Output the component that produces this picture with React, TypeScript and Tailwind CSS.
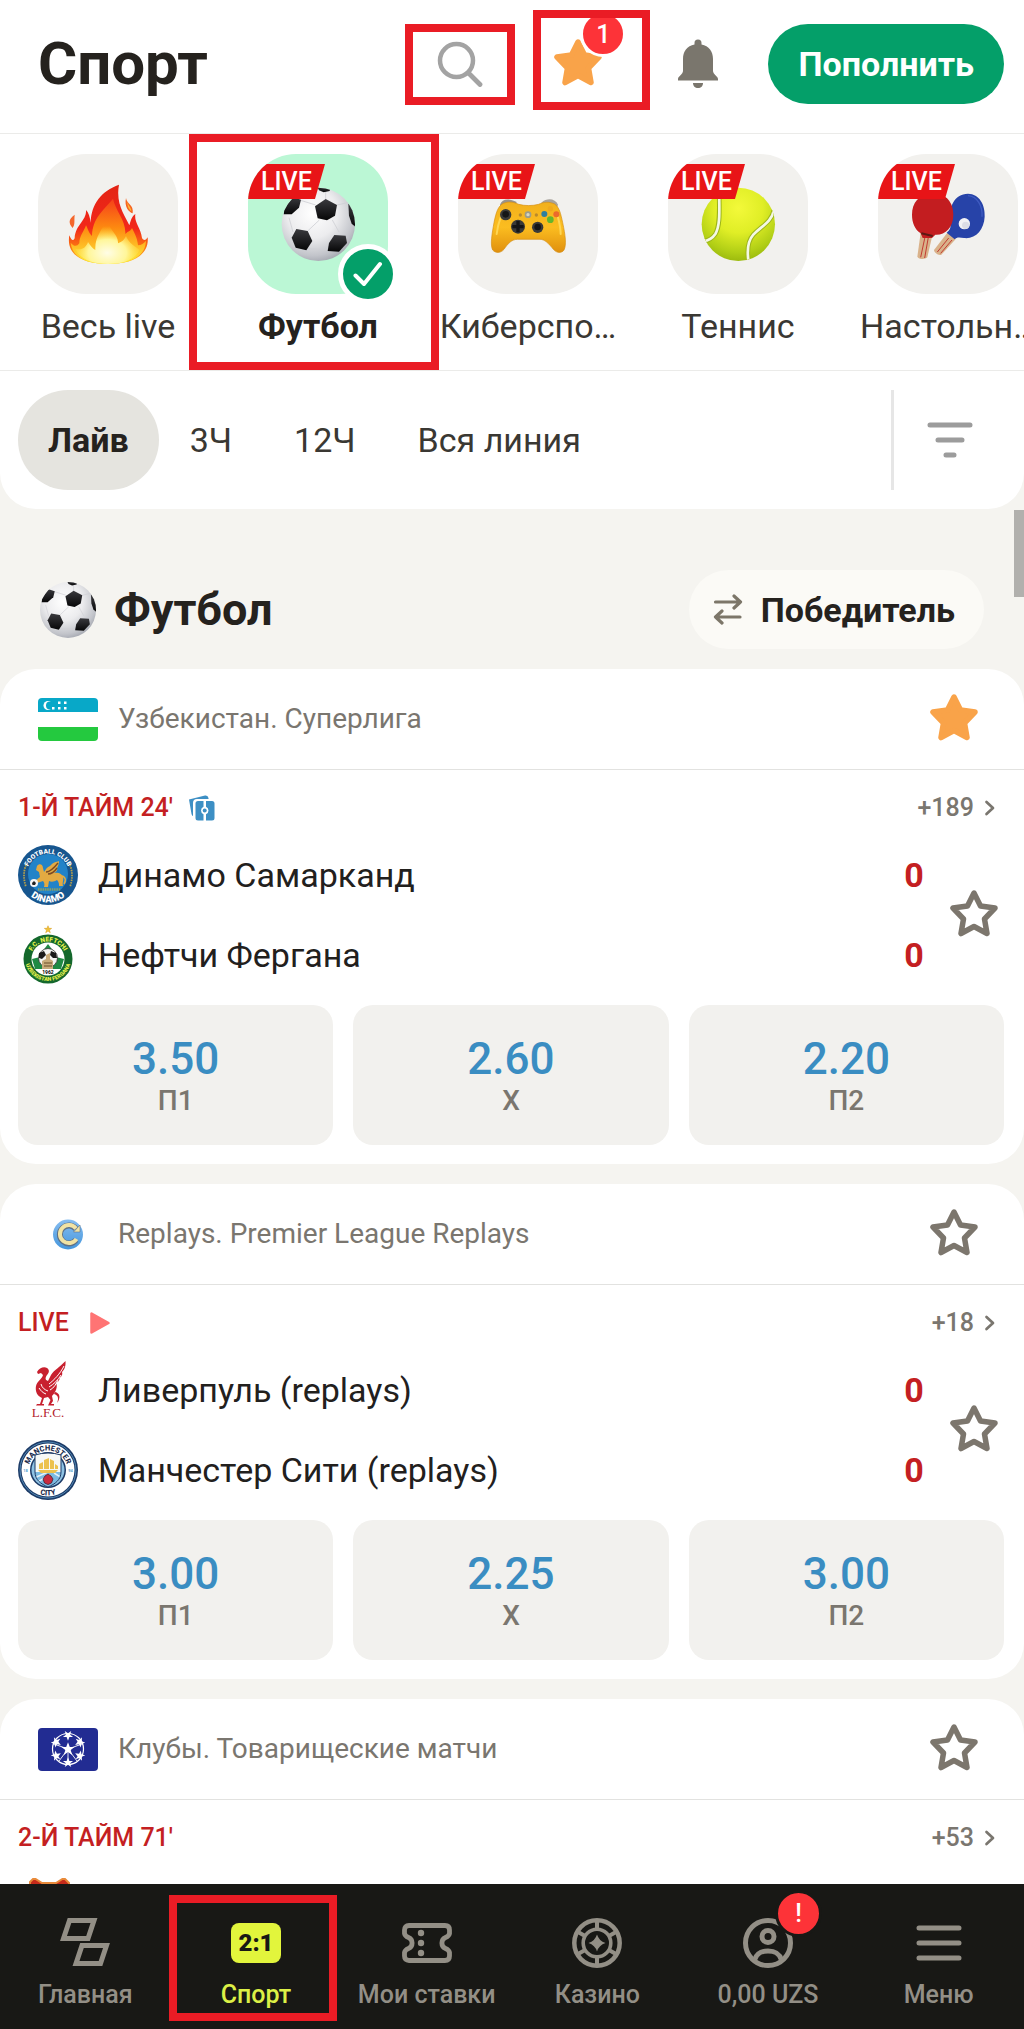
import type { ReactNode } from "react";

const FRAME = "pointer-events-none absolute z-20 border-8 border-[#ea1c25]";

/* ---------- shared icons ---------- */

const STAR =
  "M24 3 L30.5 16 L45 18 L34.5 29 L37 43.5 L24 36.5 L11 43.5 L13.5 29 L3 18 L17.5 16 Z";

function Star({ filled = false }: { filled?: boolean }) {
  const color = filled ? "#f9a349" : "#7c766d";
  return (
    <svg viewBox="0 0 48 47" className="h-[47px] w-12" aria-hidden="true">
      <path
        d={STAR}
        fill={filled ? color : "none"}
        stroke={color}
        strokeWidth="5.5"
        strokeLinejoin="round"
      />
    </svg>
  );
}

function SoccerArt({ id }: { id: string }) {
  return (
    <g>
      <defs>
        <radialGradient id={id + "g"} cx="0.42" cy="0.35" r="0.68">
          <stop offset="0" stopColor="#ffffff" />
          <stop offset="0.5" stopColor="#ececee" />
          <stop offset="0.85" stopColor="#c2c4ca" />
          <stop offset="1" stopColor="#a4a7b0" />
        </radialGradient>
        <linearGradient id={id + "p"} x1="0" y1="0" x2="0" y2="1">
          <stop offset="0" stopColor="#3a3a3e" />
          <stop offset="1" stopColor="#060607" />
        </linearGradient>
        <clipPath id={id + "c"}>
          <circle cx="110" cy="110" r="110" />
        </clipPath>
      </defs>
      <circle cx="110" cy="110" r="110" fill={"url(#" + id + "g)"} />
      <g clipPath={"url(#" + id + "c)"}>
        <path
          d="M132 36V6M102 52 57 38M113 97 78 130M152 97l20 36M166 52l36 -8M78 183l62 4M34 133 22 90"
          fill="none"
          stroke="#cfd0d5"
          strokeWidth="2.5"
        />
        <g fill={"url(#" + id + "p)"}>
          <path d="M132 34 166 52 160 84 136 98 108 92 100 56Z" />
          <path d="M44 124 78 130 92 160 74 188 42 180 30 150Z" />
          <path d="M158 142 192 144 196 166 172 192 138 190 142 166Z" />
          <path d="M8 62 34 28 58 36 52 60 30 80 6 80Z" />
          <path d="M200 48 224 60 224 120 210 108 202 84Z" />
          <path d="M106 -4 146 0 144 10 126 14 112 8Z" />
        </g>
      </g>
    </g>
  );
}

/* ---------- category pictures, drawn on a 420-unit tile ---------- */

function Tile({ children }: { children: ReactNode }) {
  return (
    <svg viewBox="0 0 420 420" className="h-full w-full" aria-hidden="true">
      {children}
    </svg>
  );
}

function FireArt() {
  return (
    <Tile>
      <defs>
        <linearGradient id="fireOuter" x1="0" y1="0" x2="0" y2="1">
          <stop offset="0" stopColor="#e32414" />
          <stop offset="0.55" stopColor="#f2281a" />
          <stop offset="0.8" stopColor="#fb7a12" />
          <stop offset="1" stopColor="#fdc526" />
        </linearGradient>
        <linearGradient id="fireMid" x1="0" y1="0" x2="0" y2="1">
          <stop offset="0" stopColor="#f5401a" />
          <stop offset="0.45" stopColor="#fd8a10" />
          <stop offset="1" stopColor="#fff03a" />
        </linearGradient>
        <radialGradient id="fireCore" cx="0.5" cy="0.75" r="0.6">
          <stop offset="0" stopColor="#fffde6" />
          <stop offset="0.5" stopColor="#fff69a" />
          <stop offset="1" stopColor="#ffdc28" stopOpacity="0" />
        </radialGradient>
      </defs>
      <path
        d="M243 92C190 112 160 148 158 206C156 190 152 176 144 168C146 200 112 212 110 252C106 262 100 260 94 244C84 300 130 330 210 330C290 330 334 300 329 250C324 258 318 262 312 252C308 220 288 206 292 180C278 190 278 204 274 214C262 186 232 150 243 92Z"
        fill="url(#fireOuter)"
      />
      <path
        d="M225 134C232 170 264 198 262 240C272 230 278 232 282 222C290 238 298 252 300 274C310 274 318 268 324 260C322 306 280 330 210 330C140 330 102 306 98 266C106 276 116 280 124 268C124 246 138 232 144 214C150 224 152 238 162 246C164 190 196 170 225 134Z"
        fill="url(#fireMid)"
      />
      <path
        d="M208 196C212 228 242 242 240 268C252 264 260 256 264 246C274 270 292 276 304 288C292 318 252 330 210 330C160 330 124 314 112 284C130 290 144 282 150 264C158 276 164 284 172 288C170 250 190 230 208 196Z"
        fill="url(#fireCore)"
      />
      <path d="M264 132C266 150 288 152 284 178C272 174 258 158 264 132Z" fill="#f7641f" />
      <path d="M268 142C270 156 280 160 280 172C272 166 268 158 268 142Z" fill="#fdb63a" />
      <path d="M110 182C90 196 92 208 104 222C112 210 108 200 110 182Z" fill="#f4672c" />
    </Tile>
  );
}

function SoccerTile() {
  return (
    <Tile>
      <g transform="translate(101 101)">
        <SoccerArt id="catBall" />
      </g>
    </Tile>
  );
}

function GamepadArt() {
  return (
    <Tile>
      <defs>
        <linearGradient id="padBody" x1="0" y1="0" x2="0" y2="1">
          <stop offset="0" stopColor="#f2b01c" />
          <stop offset="0.5" stopColor="#fbbd20" />
          <stop offset="1" stopColor="#e0900e" />
        </linearGradient>
      </defs>
      <path d="M126 152C132 134 152 132 176 144L170 160H128Z" fill="#98938c" />
      <path d="M250 146C268 130 292 134 300 152L296 164H252Z" fill="#a8a39b" />
      <path
        d="M136 148C156 140 170 146 182 151C202 156 222 156 242 151C256 144 272 142 290 150C304 160 308 178 314 206C322 244 326 272 318 288C312 298 296 298 286 286C272 268 260 256 246 256H178C162 256 150 268 138 286C128 298 112 298 104 288C96 272 102 240 108 206C114 176 120 156 136 148Z"
        fill="url(#padBody)"
        stroke="#d58f14"
        strokeWidth="2"
      />
      <path d="M128 190C122 206 118 222 116 240M300 190C304 206 308 222 308 240" fill="none" stroke="#ffd652" strokeWidth="6" strokeLinecap="round" />
      <g fill="#3a3a38">
        <circle cx="143" cy="182" r="17" />
        <circle cx="180" cy="218" r="21" />
        <circle cx="239" cy="220" r="17" />
      </g>
      <g fill="#151617">
        <circle cx="143" cy="181" r="10" />
        <circle cx="239" cy="219" r="10" />
        <path d="M175 201h10v12h12v10h-12v12h-10v-12h-12v-10h12Z" />
      </g>
      <circle cx="210" cy="182" r="10" fill="#9b9c8c" />
      <circle cx="210" cy="182" r="5" fill="#d8d6c2" />
      <circle cx="187" cy="183" r="5" fill="#b98a2c" />
      <circle cx="235" cy="183" r="5" fill="#b98a2c" />
      <circle cx="259" cy="180" r="9" fill="#2f7f9e" />
      <circle cx="277" cy="164" r="8" fill="#f0a91c" />
      <circle cx="295" cy="181" r="9" fill="#ec6a2c" />
      <circle cx="277" cy="197" r="10" fill="#64b62c" />
    </Tile>
  );
}

function TennisArt() {
  return (
    <Tile>
      <defs>
        <radialGradient id="tennis" cx="0.5" cy="0.28" r="0.75">
          <stop offset="0" stopColor="#f3f93a" />
          <stop offset="0.45" stopColor="#e0ee26" />
          <stop offset="0.8" stopColor="#b2cf16" />
          <stop offset="1" stopColor="#97b60c" />
        </radialGradient>
        <clipPath id="tennisClip">
          <circle cx="211" cy="211" r="110" />
        </clipPath>
      </defs>
      <circle cx="211" cy="211" r="110" fill="url(#tennis)" />
      <g clipPath="url(#tennisClip)" fill="none">
        <path d="M154 110C152 150 160 210 142 240C134 252 122 260 106 262" stroke="#9db51a" strokeWidth="14" />
        <path d="M154 110C152 150 160 210 142 240C134 252 122 260 106 262" stroke="#f4f8e6" strokeWidth="8" />
        <path d="M318 168C310 206 280 216 256 242C238 262 236 288 242 326" stroke="#9db51a" strokeWidth="14" />
        <path d="M318 168C310 206 280 216 256 242C238 262 236 288 242 326" stroke="#f4f8e6" strokeWidth="8" />
      </g>
    </Tile>
  );
}

function PaddlesArt() {
  return (
    <Tile>
      <path d="M208 236 234 254 190 302C182 306 168 296 168 288Z" fill="#d9b28a" />
      <path d="M212 252 178 294M222 258 188 298" stroke="#c23b32" strokeWidth="3" />
      <path
        d="M270 119C304 120 322 152 320 188C318 228 292 256 258 252C246 250 236 248 230 256L206 236C218 226 218 220 218 206C210 160 228 120 270 119Z"
        fill="#2743a8"
      />
      <path d="M270 125C298 127 314 156 312 188" fill="none" stroke="#3f5bc0" strokeWidth="4" />
      <path d="M128 236 164 240 148 310C140 318 122 316 118 308Z" fill="#d9b28a" />
      <path d="M142 244 128 310M152 244 140 312" stroke="#c23b32" strokeWidth="3" />
      <path
        d="M162 119C204 116 226 146 226 182C226 222 200 244 172 242L162 252H134L128 238C110 226 102 206 102 182C102 146 122 120 162 119Z"
        fill="#c31d20"
      />
      <path d="M130 238 164 246" stroke="#5b1a14" strokeWidth="6" />
      <circle cx="259" cy="209" r="17" fill="#f2f2f5" />
      <circle cx="263" cy="214" r="11" fill="#dcdde6" />
    </Tile>
  );
}

function Category({
  label,
  live = false,
  active = false,
  children,
}: {
  label: string;
  live?: boolean;
  active?: boolean;
  children: ReactNode;
}) {
  return (
    <li className="relative w-[210px] shrink-0">
      <button
        type="button"
        aria-pressed={active}
        className="flex w-full flex-col items-center pt-5 pb-5"
      >
        <span className="relative block">
          <span
            className={
              "relative block h-[140px] w-[140px] overflow-hidden rounded-[48px] " +
              (active ? "bg-[#bbf7d5]" : "bg-[#f2f1ee]")
            }
          >
            {children}
            {live && (
              <span className="absolute top-[10px] left-0 h-[35px] w-[77px] bg-[#e81417] pl-[13px] text-left text-[25px] leading-[35px] font-medium text-white [clip-path:polygon(0_0,100%_0,87%_100%,0_100%)]">
                LIVE
              </span>
            )}
          </span>
          {active && (
            <span className="absolute -right-[10px] -bottom-[10px] flex h-[60px] w-[60px] items-center justify-center rounded-full border-[5px] border-white bg-[#049f69]">
              <svg viewBox="0 0 30 26" className="h-[26px] w-[30px]" aria-hidden="true">
                <path
                  d="M2.5 14.500 11 23 27 3"
                  fill="none"
                  stroke="#fff"
                  strokeWidth="4"
                  strokeLinecap="round"
                  strokeLinejoin="round"
                />
              </svg>
            </span>
          )}
        </span>
        <span
          className={
            "mt-2 text-[34px] leading-[48px] whitespace-nowrap " +
            (active ? "font-bold text-[#25221e]" : "text-[#3a3833]")
          }
        >
          {label}
        </span>
      </button>
      {active && <span className={FRAME + " inset-y-0 -right-4 -left-6"} />}
    </li>
  );
}

/* ---------- league flags ---------- */

function UzFlag() {
  return (
    <svg viewBox="0 0 60 43" className="h-[43px] w-[60px] rounded" aria-hidden="true">
      <rect width="60" height="43" fill="#fff" />
      <rect width="60" height="14" fill="#08a8c8" />
      <rect y="29" width="60" height="14" fill="#24c93f" />
      <circle cx="10" cy="7.500" r="4.500" fill="#fff" />
      <circle cx="12" cy="7.500" r="4" fill="#08a8c8" />
      <g fill="#fff">
        <rect x="14" y="9" width="2.500" height="2.500" />
        <rect x="20" y="3.500" width="2.500" height="2.500" />
        <rect x="20" y="9" width="2.500" height="2.500" />
        <rect x="26" y="3.500" width="2.500" height="2.500" />
        <rect x="26" y="9" width="2.500" height="2.500" />
      </g>
    </svg>
  );
}

function ReplayCoin() {
  return (
    <svg viewBox="0 0 60 43" className="h-[43px] w-[60px]" aria-hidden="true">
      <defs>
        <linearGradient id="coin" x1="0" y1="0" x2="0" y2="1">
          <stop offset="0" stopColor="#86bdf0" />
          <stop offset="1" stopColor="#4596dc" />
        </linearGradient>
      </defs>
      <circle cx="30" cy="21.500" r="15" fill="url(#coin)" />
      <path d="M38 16A9 9 0 1 0 38 27" fill="none" stroke="#5f7186" strokeWidth="6" />
      <path d="M38 15.500A9 9 0 1 0 38.500 26" fill="none" stroke="#f1e3a4" strokeWidth="4" />
      <path d="M42 12V19H35.500Z" fill="#f1e3a4" stroke="#5f7186" strokeWidth="0.600" />
    </svg>
  );
}

const SMALL_STAR =
  "M0 -7.500 2 -2.300 7.300 -2.300 3 1.200 4.600 6.600 0 3.200 -4.600 6.600 -3 1.200 -7.300 -2.300 -2 -2.300Z";

function StarballFlag() {
  return (
    <svg viewBox="0 0 60 43" className="h-[43px] w-[60px] rounded" aria-hidden="true">
      <rect width="60" height="43" fill="#222c92" />
      <circle cx="30" cy="21" r="15.500" fill="none" stroke="#fff" strokeWidth="1.200" />
      <path
        d="M30 21 30 36M30 21 16 16M30 21 44 16M30 21 21 33M30 21 39 33"
        stroke="#fff"
        strokeWidth="0.900"
      />
      <g fill="#fff">
        <path d={SMALL_STAR} transform="translate(30 21) scale(0.900)" />
        {[0, 60, 120, 180, 240, 300].map((a) => (
          <path
            key={a}
            d={SMALL_STAR}
            transform={"translate(30 21) rotate(" + a + ") translate(0 -13.500) scale(0.700) rotate(180)"}
          />
        ))}
      </g>
    </svg>
  );
}

/* ---------- club crests ---------- */

function DinamoCrest() {
  return (
    <svg viewBox="0 0 60 60" className="h-[60px] w-[60px] shrink-0" aria-hidden="true">
      <defs>
        <path id="dinTop" d="M8.500 30A21.500 21.500 0 0 1 51.500 30" />
        <path id="dinBottom" d="M2.500 30A27.500 27.500 0 0 0 57.500 30" />
      </defs>
      <circle cx="30" cy="30" r="30" fill="#17568f" />
      <circle cx="30" cy="29" r="20" fill="#2283c8" />
      <g fill="#fff" fontFamily="Roboto, sans-serif" fontWeight="900">
        <text fontSize="6.500" textAnchor="middle">
          <textPath href="#dinTop" startOffset="50%">FOOTBALL CLUB</textPath>
        </text>
        <text fontSize="9.500" textAnchor="middle">
          <textPath href="#dinBottom" startOffset="50%">DINAMO</textPath>
        </text>
      </g>
      <path d="M8 20Q4 30 8 42M52 20Q56 30 52 42" fill="none" stroke="#b9a24a" strokeWidth="1.800" strokeDasharray="1.500 1" />
      <path
        d="M19 21C21 18 25 19 25 23L26 27C28 24 29 22 32 21C36 16 40 17 41 16C41 19 40 21 39 23C40 25 38 27 36 28C41 27 44 29 45 32C46 35 44 37 45 41L41 41C41 39 41 37 39 35C36 37 33 37 31 36L30 42 26 42C27 39 26 37 25 36L19 38 17 36 22 32 21 27 18 25Z"
        fill="#e3aa42"
      />
      <path d="M28 27C32 27 36 23 40 18M30 29C34 29 37 26 39 23" fill="none" stroke="#7d4a22" strokeWidth="1.400" />
      <path d="M44 31C48 32 48 36 46 39" fill="none" stroke="#e3aa42" strokeWidth="1.500" />
      <circle cx="16" cy="38" r="4" fill="#f4f4f4" />
      <path d="M16 36 18 38 17 40 14.500 40 14 38Z" fill="#222" />
      <path d="M20 44.500H43" stroke="#8ea060" strokeWidth="2.500" strokeDasharray="1.500 0.800" />
    </svg>
  );
}

function NeftchiCrest() {
  return (
    <svg viewBox="0 0 60 60" className="h-[60px] w-[60px] shrink-0" aria-hidden="true">
      <defs>
        <path id="nefTop" d="M12 34.500A18 18 0 0 1 48 34.500" />
        <path id="nefBottom" d="M7 33A23 23 0 0 0 53 33" />
      </defs>
      <path d={SMALL_STAR} transform="translate(30 4.500) scale(0.500)" fill="#f0c23a" stroke="#d69a1c" strokeWidth="1" />
      <circle cx="30" cy="34" r="24.500" fill="#14682c" />
      <circle cx="30" cy="34" r="16.500" fill="#fff" />
      <g fill="#e6f04a" fontFamily="Roboto, sans-serif" fontWeight="900">
        <text fontSize="6.500" textAnchor="middle">
          <textPath href="#nefTop" startOffset="50%">F.C. NEFTCHI</textPath>
        </text>
        <text fontSize="5.500" textAnchor="middle">
          <textPath href="#nefBottom" startOffset="50%">UZBEKISTAN FERGANA</textPath>
        </text>
      </g>
      <path d="M30 19 36 27 30 29 24 27ZM14 34 22 32 26 44 17 44ZM46 34 38 32 34 44 43 44Z" fill="#1f8a44" />
      <circle cx="30" cy="33" r="9.500" fill="#f4f4f2" stroke="#333" strokeWidth="0.800" />
      <path d="M21 28 26 26 28 30 24 34 21 33ZM33 26 38 28 39 33 35 33 32 30Z" fill="#1a1a1a" />
      <path d="M24 36 28 34V30L32 28V34L35 36V44H24Z" fill="#c9ac7c" />
      <path d="M26 38H34M26 41H34" stroke="#6a4c28" strokeWidth="1" />
      <rect x="24" y="44" width="12" height="5" fill="#fff" />
      <text x="30" y="48.500" fontSize="5" fontWeight="700" textAnchor="middle" fontFamily="Roboto, sans-serif">
        1962
      </text>
    </svg>
  );
}

function LiverpoolCrest() {
  return (
    <svg viewBox="0 0 60 60" className="h-[60px] w-[60px] shrink-0" aria-hidden="true">
      <g fill="#c8202f">
        <path d="M19 12C21 8 26 6 29 8C32 10 31 13 29 15C27 18 27 20 30 21L33 15C36 10 42 7 47.500 1C48 7 46 10 44 12C45 15 43 17 41.500 18C42 20 40 22 38 23C40 26 38 32 34 36L35 41 33 44H36V45.500H30L32.500 40 30 37 26 38 24 44H26V45.500H18L19 44H22L24 38C19 36 17 31 18 26C19 21 24 19 25 15L23 13 20 14Z" />
        <path d="M37 32C42 33 43 38 39 43C41 38 40 35 36 34Z" />
      </g>
      <path
        d="M31 24C36 20 42 14 46 6M31 27C36 24 40 20 43 15M32 30C36 28 38 24 40 20M21 28C23 31 25 33 28 34M23 24C24 28 27 30 30 31"
        fill="none"
        stroke="#fff"
        strokeWidth="1"
      />
      <text x="30" y="57" fill="#b3202c" fontSize="13" textAnchor="middle" fontFamily="'Liberation Serif', serif">
        L.F.C.
      </text>
    </svg>
  );
}

function CityCrest() {
  return (
    <svg viewBox="0 0 60 60" className="h-[60px] w-[60px] shrink-0" aria-hidden="true">
      <defs>
        <path id="cityTop" d="M10.500 30A19.500 19.500 0 0 1 49.500 30" />
        <path id="cityBottom" d="M4.500 30A25.500 25.500 0 0 0 55.500 30" />
        <clipPath id="cityShield">
          <path d="M17 15Q30 11 43 15V32C43 40 37 44 30 47C23 44 17 40 17 32Z" />
        </clipPath>
      </defs>
      <circle cx="30" cy="30" r="30" fill="#1c3a66" />
      <circle cx="30" cy="30" r="28" fill="none" stroke="#5e9ac6" strokeWidth="0.800" />
      <circle cx="30" cy="30" r="26.500" fill="#fff" />
      <circle cx="30" cy="30" r="18" fill="#1c3a66" />
      <circle cx="30" cy="30" r="16.500" fill="#8fc3e4" />
      <g clipPath="url(#cityShield)">
        <rect x="14" y="10" width="32" height="40" fill="#f6f8f6" />
        <rect x="14" y="32" width="32" height="18" fill="#7cbbe2" />
        <path d="M16 38 30 32M16 44 32 35M44 38 36 33" stroke="#e4f1f8" strokeWidth="1.500" />
      </g>
      <path d="M17 15Q30 11 43 15V32C43 40 37 44 30 47C23 44 17 40 17 32Z" fill="none" stroke="#1c3a66" strokeWidth="1" />
      <path d="M20 30H40L37 33H23ZM21 24 25 22V29H21ZM26 20 31 18V29H26ZM32 19 36 21V29H32ZM37 24 40 26V29H37Z" fill="#ecc24e" />
      <path d="M30 34 33 36 35 39 33.500 43 30 44.500 26.500 43 25 39 27 36Z" fill="#c92b3f" stroke="#3d2438" strokeWidth="0.800" />
      <g fill="#1c2c4c" fontFamily="Roboto, sans-serif" fontWeight="800">
        <text fontSize="7.500" textAnchor="middle">
          <textPath href="#cityTop" startOffset="50%">MANCHESTER</textPath>
        </text>
        <text fontSize="7.500" textAnchor="middle">
          <textPath href="#cityBottom" startOffset="50%">CITY</textPath>
        </text>
      </g>
      <g fill="#5aa3d2" fontSize="4" fontWeight="700" fontFamily="Roboto, sans-serif" textAnchor="middle">
        <text x="7.500" y="31.500">18</text>
        <text x="52.500" y="31.500">94</text>
      </g>
    </svg>
  );
}

function FlameCrest() {
  return (
    <svg viewBox="0 0 60 60" className="h-[60px] w-[60px] shrink-0" aria-hidden="true">
      <path d="M12 4 16 0 24 5H38L46 0 51 5 48 44 30 58 12 44Z" fill="#c62a1a" stroke="#e88a3a" strokeWidth="2" />
    </svg>
  );
}

/* ---------- match cards ---------- */

function ScreensIcon() {
  return (
    <svg viewBox="0 0 26 26" className="h-[26px] w-[26px]" aria-hidden="true">
      <path d="M0 4.500 16 0.500Q19 0 19.500 3V4H8Q4 4 4 8V21Q3 21 2.500 19Z" fill="#3d8fc4" />
      <path d="M9 6H14.500V11.800A4 4 0 0 0 14.500 19.200V25.500H9Q6.500 25.500 6.500 23V8.500Q6.500 6 9 6ZM17 6H23Q25.500 6 25.500 8.500V23Q25.500 25.500 23 25.500H17V19.200A4 4 0 0 0 17 11.800Z" fill="#3d8fc4" />
      <circle cx="15.700" cy="15.500" r="2" fill="#3d8fc4" />
    </svg>
  );
}

function PlayIcon() {
  return (
    <svg viewBox="0 0 26 26" className="h-[26px] w-[26px]" aria-hidden="true">
      <path d="M6.500 3.500V22.500L23.500 13Z" fill="#ff7474" stroke="#ff7474" strokeWidth="2.500" strokeLinejoin="round" />
    </svg>
  );
}

type Team = { name: string; score: string; crest: ReactNode };
type Odd = { value: string; label: string };

function MatchCard({
  flag,
  league,
  favorite = false,
  status,
  statusIcon,
  more,
  teams,
  odds,
  children,
}: {
  flag: ReactNode;
  league: string;
  favorite?: boolean;
  status: string;
  statusIcon?: ReactNode;
  more: string;
  teams?: Team[];
  odds?: Odd[];
  children?: ReactNode;
}) {
  return (
    <article className="rounded-[36px] bg-white pb-[19px]">
      <header className="flex h-[101px] items-center border-b border-[#e2e2e0] pr-10 pl-[38px]">
        {flag}
        <h3 className="ml-5 flex-1 text-[28px] leading-9 text-[#7a766f]">{league}</h3>
        <button
          type="button"
          aria-label="Лига в избранное"
          aria-pressed={favorite}
          className="flex h-[60px] w-[60px] items-center justify-center pb-1"
        >
          <Star filled={favorite} />
        </button>
      </header>
      <div className="pr-5 pl-[18px]">
        <div className="flex items-center pt-[22px]">
          <span className="text-[25px] leading-8 font-medium text-[#c41f22]">{status}</span>
          <span className="ml-4">{statusIcon}</span>
          <a href="#match" className="mr-2 ml-auto flex items-center gap-2.5 text-[25px] leading-8 font-medium text-[#7a766f]">
            {more}
            <svg viewBox="0 0 12 16" className="h-4 w-3" aria-hidden="true">
              <path d="M2.500 2 9 8 2.500 14" fill="none" stroke="#7a766f" strokeWidth="2.700" strokeLinecap="round" strokeLinejoin="round" />
            </svg>
          </a>
        </div>
        {teams && (
          <div className="mt-[21px] flex items-center">
            <ul className="flex flex-1 flex-col gap-5">
              {teams.map((team) => (
                <li key={team.name} className="flex h-[60px] items-center">
                  {team.crest}
                  <span className="ml-5 flex-1 text-[34px] leading-[48px] text-[#22201d]">{team.name}</span>
                  <span className="w-[60px] text-center text-[34px] leading-[48px] font-bold text-[#c41f22]">
                    {team.score}
                  </span>
                </li>
              ))}
            </ul>
            <button
              type="button"
              aria-label="Матч в избранное"
              className="flex h-[60px] w-[60px] items-center justify-center pb-1"
            >
              <Star />
            </button>
          </div>
        )}
        {odds && (
          <div className="mt-5 grid grid-cols-3 gap-5">
            {odds.map((odd) => (
              <button
                key={odd.label}
                type="button"
                className="flex h-[140px] flex-col items-center justify-center rounded-[20px] bg-[#f2f1ee] pt-1"
              >
                <span className="text-[44px] leading-[48px] font-medium text-[#3a8dc2]">{odd.value}</span>
                <span className="text-[28px] leading-9 font-medium text-[#7a766f]">{odd.label}</span>
              </button>
            ))}
          </div>
        )}
        {children}
      </div>
    </article>
  );
}

/* ---------- bottom navigation ---------- */

function NavItem({
  label,
  active = false,
  children,
}: {
  label: string;
  active?: boolean;
  children: ReactNode;
}) {
  return (
    <li className="relative">
      <a
        href={"#" + label}
        aria-current={active ? "page" : undefined}
        className={
          "flex flex-col items-center pt-[34px] pb-[19px] " +
          (active ? "text-[#dcf046]" : "text-[#938f86]")
        }
      >
        <span className="relative block h-[50px] w-[50px]">{children}</span>
        <span className="mt-3 text-[25px] leading-[30px] font-medium whitespace-nowrap">{label}</span>
      </a>
      {active && <span className={FRAME + " top-[11px] right-1 bottom-2 -left-0.5"} />}
    </li>
  );
}

function NavIcon({ children }: { children: ReactNode }) {
  return (
    <svg viewBox="0 0 50 50" className="h-[50px] w-[50px]" fill="none" stroke="currentColor" aria-hidden="true">
      {children}
    </svg>
  );
}

export default function App() {
  return (
    <div className="flex h-screen flex-col overflow-hidden bg-[#f5f4f0] font-[Roboto,sans-serif] text-[#25221e]">
      <header className="flex items-center border-b border-[#ebebe9] bg-white pt-6 pr-5 pb-[29px] pl-[38px]">
        <h1 className="flex-1 text-[60px] leading-[80px] font-bold">Спорт</h1>
        <button
          type="button"
          aria-label="Поиск"
          className="relative flex h-20 w-[110px] items-center justify-center"
        >
          <svg viewBox="0 0 46 46" className="h-[46px] w-[46px]" aria-hidden="true">
            <circle cx="19.500" cy="19.500" r="16.500" fill="none" stroke="#a3a3a3" strokeWidth="4.500" />
            <path d="M31.500 32 43 43.500" stroke="#a3a3a3" strokeWidth="4.800" strokeLinecap="round" />
          </svg>
          <span className={FRAME + " inset-x-0 top-0 -bottom-px"} />
        </button>
        <button type="button" aria-label="Избранное" className="relative ml-[18px] h-20 w-[117px]">
          <span className="absolute top-[15px] left-[21px]">
            <Star filled />
          </span>
          <span className="absolute -top-[13px] left-[47px] flex h-[46px] w-[46px] items-center justify-center rounded-full border-[3px] border-white bg-[#fd3338] text-[25px] leading-none font-medium text-white">
            1
          </span>
          <span className={FRAME + " inset-x-0 -top-3.5 -bottom-1.5"} />
        </button>
        <button type="button" aria-label="Уведомления" className="ml-7">
          <svg viewBox="0 0 40 50" className="h-[50px] w-10" fill="#7a766d" aria-hidden="true">
            <path d="M20 0.500C22.500 0.500 23.500 2 23.500 4V5.500C31 7 35 12.500 35 20V32C35 35 40 37.500 40 40V41.500H0V40C0 37.500 5 35 5 32V20C5 12.500 9 7 16.500 5.500V4C16.500 2 17.500 0.500 20 0.500Z" />
            <path d="M15 44H25C25 47 23 49 20 49S15 47 15 44Z" />
          </svg>
        </button>
        <button
          type="button"
          className="ml-[50px] h-20 rounded-full bg-[#049f69] px-[30px] text-[34px] leading-10 font-bold text-white"
        >
          Пополнить
        </button>
      </header>

      <nav aria-label="Виды спорта" className="overflow-hidden border-b border-[#ebebe9] bg-white">
        <ul className="flex pl-[3px]">
          <Category label="Весь live">
            <FireArt />
          </Category>
          <Category label="Футбол" live active>
            <SoccerTile />
          </Category>
          <Category label="Киберспо…" live>
            <GamepadArt />
          </Category>
          <Category label="Теннис" live>
            <TennisArt />
          </Category>
          <Category label="Настольн…" live>
            <PaddlesArt />
          </Category>
        </ul>
      </nav>

      <div className="flex rounded-b-[36px] bg-white py-[19px] pl-[18px] text-[34px] leading-[48px] text-[#3a3833]">
        <button type="button" aria-pressed="true" className="h-[100px] rounded-full bg-[#e5e4df] px-[30px] font-bold text-[#25221e]">
          Лайв
        </button>
        <button type="button" className="px-[31px]">3Ч</button>
        <button type="button" className="px-[31px]">12Ч</button>
        <button type="button" className="px-[31px]">Вся линия</button>
        <button
          type="button"
          aria-label="Фильтр"
          className="ml-auto flex w-[133px] items-center border-l-[3px] border-[#e6e6e6] pl-[33px]"
        >
          <svg viewBox="0 0 46 36" className="h-9 w-[46px]" stroke="#9c9c9c" strokeWidth="5" strokeLinecap="round" aria-hidden="true">
            <path d="M3 3H43M11 18H35M19 33H27" />
          </svg>
        </button>
      </div>

      <main className="relative min-h-0 flex-1 overflow-hidden">
        <span className="absolute top-px right-0 h-[87px] w-2.5 bg-[#b1b0ad]" />
        <div className="flex items-center pt-[61px] pr-10 pb-5 pl-10">
          <svg viewBox="0 0 220 220" className="h-14 w-14" aria-hidden="true">
            <SoccerArt id="headBall" />
          </svg>
          <h2 className="ml-[18px] flex-1 text-[45px] leading-[60px] font-bold">Футбол</h2>
          <button
            type="button"
            className="flex h-[79px] items-center rounded-full bg-[#fbfaf6] pr-[29px] pl-6 text-[34px] leading-10 font-bold"
          >
            <svg viewBox="0 0 30 31" className="mr-[18px] h-[31px] w-[30px]" fill="none" stroke="#7c7669" strokeWidth="3.200" strokeLinecap="round" strokeLinejoin="round" aria-hidden="true">
              <path d="M2.500 8H27.500M21 2 27.500 8 21 14M27 23H2.500M9 17 2.500 23 9 29" />
            </svg>
            Победитель
          </button>
        </div>

        <div className="flex flex-col gap-5">
          <MatchCard
            flag={<UzFlag />}
            league="Узбекистан. Суперлига"
            favorite
            status="1-Й ТАЙМ 24'"
            statusIcon={<ScreensIcon />}
            more="+189"
            teams={[
              { name: "Динамо Самарканд", score: "0", crest: <DinamoCrest /> },
              { name: "Нефтчи Фергана", score: "0", crest: <NeftchiCrest /> },
            ]}
            odds={[
              { value: "3.50", label: "П1" },
              { value: "2.60", label: "X" },
              { value: "2.20", label: "П2" },
            ]}
          />
          <MatchCard
            flag={<ReplayCoin />}
            league="Replays. Premier League Replays"
            status="LIVE"
            statusIcon={<PlayIcon />}
            more="+18"
            teams={[
              { name: "Ливерпуль (replays)", score: "0", crest: <LiverpoolCrest /> },
              { name: "Манчестер Сити (replays)", score: "0", crest: <CityCrest /> },
            ]}
            odds={[
              { value: "3.00", label: "П1" },
              { value: "2.25", label: "X" },
              { value: "3.00", label: "П2" },
            ]}
          />
          <MatchCard
            flag={<StarballFlag />}
            league="Клубы. Товарищеские матчи"
            status="2-Й ТАЙМ 71'"
            more="+53"
          >
            <div className="mt-6">
              <FlameCrest />
            </div>
          </MatchCard>
        </div>
      </main>

      <nav aria-label="Основное меню" className="bg-[#181815]">
        <ul className="grid grid-cols-6">
          <NavItem label="Главная">
            <NavIcon>
              <path d="M9.500 2.500H34L28 20.500H3.500ZM22 27.500H46.500L40.500 45.500H16Z" strokeWidth="5" />
            </NavIcon>
          </NavItem>
          <NavItem label="Спорт" active>
            <span className="absolute inset-x-0 inset-y-[5px] flex items-center justify-center rounded-lg bg-[#e2f53c] text-[24px] leading-none font-black text-[#181815]">
              2:1
            </span>
          </NavItem>
          <NavItem label="Мои ставки">
            <NavIcon>
              <path
                d="M7 7.500H43Q47.500 7.500 47.500 12V15.500Q47 18 43.500 19.500A6 6 0 0 0 43.500 30.500Q47 32 47.500 34.500V38Q47.500 42.500 43 42.500H7Q2.500 42.500 2.500 38V34.500Q3 32 6.500 30.500A6 6 0 0 0 6.500 19.500Q3 18 2.500 15.500V12Q2.500 7.500 7 7.500Z"
                strokeWidth="4.800"
              />
              <g fill="currentColor" stroke="none">
                <circle cx="19" cy="15" r="3.200" />
                <circle cx="19" cy="25" r="3.200" />
                <circle cx="19" cy="35" r="3.200" />
              </g>
            </NavIcon>
          </NavItem>
          <NavItem label="Казино">
            <NavIcon>
              <circle cx="25" cy="25" r="22.700" strokeWidth="4.500" />
              <circle cx="25" cy="25" r="13.800" strokeWidth="3.600" />
              <path d="M25 3V12M25 38V47M6 14 14 18.500M36 31.500 44 36M6 36 14 31.500M36 18.500 44 14" strokeWidth="4" />
              <path d="M25 16.500Q27 23 33.500 25Q27 27 25 33.500Q23 27 16.500 25Q23 23 25 16.500Z" fill="currentColor" stroke="none" />
            </NavIcon>
          </NavItem>
          <NavItem label="0,00 UZS">
            <NavIcon>
              <circle cx="25" cy="25" r="22.500" strokeWidth="5" />
              <circle cx="25" cy="18.500" r="6" strokeWidth="5" />
              <path d="M11.500 42C14 34.500 19 33 25 33S36 34.500 38.500 42" strokeWidth="5" />
            </NavIcon>
            <span className="absolute -top-7 left-8 flex h-[47px] w-[47px] items-center justify-center rounded-full border-[3px] border-[#181815] bg-[#fd3338] text-[25px] leading-none font-medium text-white">
              !
            </span>
          </NavItem>
          <NavItem label="Меню">
            <NavIcon>
              <path d="M5 10H45M5 25H45M5 40H45" strokeWidth="5" strokeLinecap="round" />
            </NavIcon>
          </NavItem>
        </ul>
      </nav>
    </div>
  );
}
